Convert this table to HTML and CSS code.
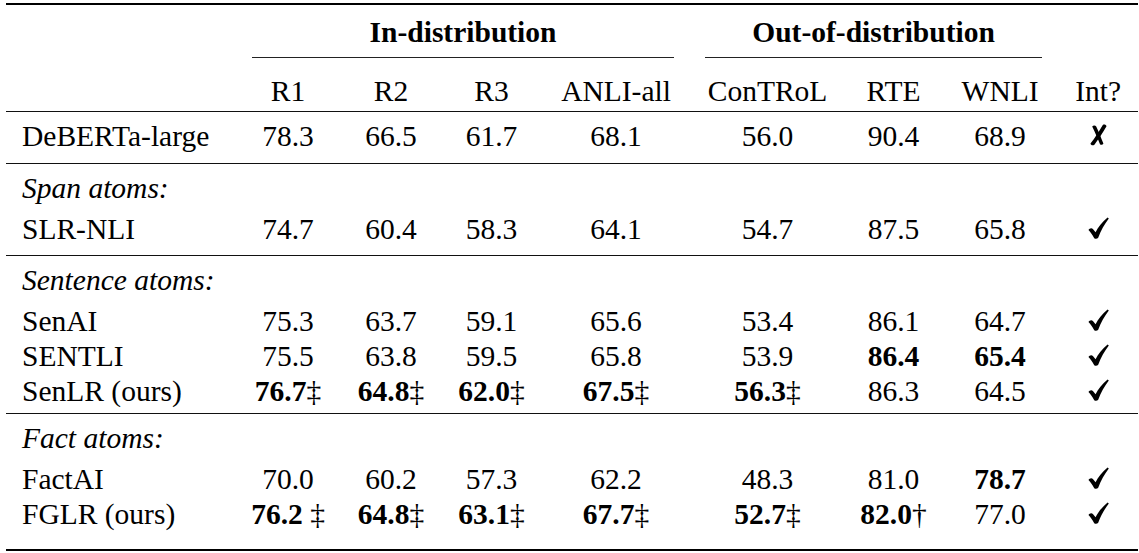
FILE: index.html
```html
<!DOCTYPE html>
<html lang="en">
<head>
<meta charset="utf-8">
<title>Results table</title>
<link rel="stylesheet" href="styles.css">
</head>
<body>
<svg class="defs" width="0" height="0" aria-hidden="true">
  <symbol id="tick" viewBox="0 0 21 22">
    <path d="M0.5 13.1 C1.5 11.1 3.7 10.5 5.1 12.2 L7.6 15.3 C9.9 10.4 14.2 4.8 19.6 0.4 L20.8 1.5 C16.4 7.2 12.9 13.6 10.2 20.8 C9.3 22.1 6.9 22.2 6.1 21.0 C4.5 18.2 2.6 15.4 0.5 13.1 Z"/>
  </symbol>
  <symbol id="cross" viewBox="0 0 20 22">
    <path d="M4.2 2.4 C5.2 1.2 7.4 1.2 8.2 2.4 C10.8 7.4 12.8 13.2 15.4 19.4 C14.8 20.9 12.9 21.3 12.0 20.2 C9.6 14.2 7.2 8.4 4.2 2.4 Z"/>
    <path d="M14.8 0.9 C16.2 0.1 18.2 0.7 18.5 2.2 C14.9 8.6 10.6 14.9 6.4 20.8 C5.0 21.9 2.6 21.3 2.5 19.6 C6.9 13.6 11.1 7.5 14.8 0.9 Z"/>
  </symbol>
</svg>
<table class="results">
  <colgroup>
    <col class="c-lbl"><col class="c-r1"><col class="c-r2"><col class="c-r3"><col class="c-anli">
    <col class="c-ctrl"><col class="c-rte"><col class="c-wnli"><col class="c-int">
  </colgroup>
  <thead>
    <tr class="hrow-1">
      <th class="lbl"></th>
      <th colspan="4" class="grp grp-in"><div class="grp-rule">In-distribution</div></th>
      <th colspan="3" class="grp grp-out"><div class="grp-rule">Out-of-distribution</div></th>
      <th></th>
    </tr>
    <tr class="hrow-2">
      <th class="lbl"></th>
      <th>R1</th><th>R2</th><th>R3</th><th>ANLI-all</th>
      <th>ConTRoL</th><th>RTE</th><th>WNLI</th><th>Int?</th>
    </tr>
  </thead>
  <tbody class="g1">
    <tr class="first last">
      <td class="lbl">DeBERTa-large</td>
      <td>78.3</td><td>66.5</td><td>61.7</td><td>68.1</td>
      <td>56.0</td><td>90.4</td><td>68.9</td>
      <td><svg class="mark" width="20" height="22"><use href="#cross"/></svg></td>
    </tr>
  </tbody>
  <tbody class="g2">
    <tr class="first"><td class="lbl grp-name" colspan="9">Span atoms:</td></tr>
    <tr class="after-head last">
      <td class="lbl">SLR-NLI</td>
      <td>74.7</td><td>60.4</td><td>58.3</td><td>64.1</td>
      <td>54.7</td><td>87.5</td><td>65.8</td>
      <td><svg class="mark" width="21" height="22"><use href="#tick"/></svg></td>
    </tr>
  </tbody>
  <tbody class="g3">
    <tr class="first"><td class="lbl grp-name" colspan="9">Sentence atoms:</td></tr>
    <tr class="after-head">
      <td class="lbl">SenAI</td>
      <td>75.3</td><td>63.7</td><td>59.1</td><td>65.6</td>
      <td>53.4</td><td>86.1</td><td>64.7</td>
      <td><svg class="mark" width="21" height="22"><use href="#tick"/></svg></td>
    </tr>
    <tr class="next">
      <td class="lbl">SENTLI</td>
      <td>75.5</td><td>63.8</td><td>59.5</td><td>65.8</td>
      <td>53.9</td><td><b>86.4</b></td><td><b>65.4</b></td>
      <td><svg class="mark" width="21" height="22"><use href="#tick"/></svg></td>
    </tr>
    <tr class="next last">
      <td class="lbl">SenLR (ours)</td>
      <td><b>76.7</b><span class="sig">‡</span></td><td><b>64.8</b><span class="sig">‡</span></td><td><b>62.0</b><span class="sig">‡</span></td><td><b>67.5</b><span class="sig">‡</span></td>
      <td><b>56.3</b><span class="sig">‡</span></td><td>86.3</td><td>64.5</td>
      <td><svg class="mark" width="21" height="22"><use href="#tick"/></svg></td>
    </tr>
  </tbody>
  <tbody class="g4">
    <tr class="first"><td class="lbl grp-name" colspan="9">Fact atoms:</td></tr>
    <tr class="after-head">
      <td class="lbl">FactAI</td>
      <td>70.0</td><td>60.2</td><td>57.3</td><td>62.2</td>
      <td>48.3</td><td>81.0</td><td><b>78.7</b></td>
      <td><svg class="mark" width="21" height="22"><use href="#tick"/></svg></td>
    </tr>
    <tr class="next last">
      <td class="lbl">FGLR (ours)</td>
      <td><b>76.2</b> <span class="sig">‡</span></td><td><b>64.8</b><span class="sig">‡</span></td><td><b>63.1</b><span class="sig">‡</span></td><td><b>67.7</b><span class="sig">‡</span></td>
      <td><b>52.7</b><span class="sig">‡</span></td><td><b>82.0</b><span class="sig">†</span></td><td>77.0</td>
      <td><svg class="mark" width="21" height="22"><use href="#tick"/></svg></td>
    </tr>
  </tbody>
</table>
</body>
</html>
```

FILE: styles.css
```css
html, body {
  margin: 0;
  padding: 0;
  background: #ffffff;
}

body {
  padding: 3px 0 0 6px;
  font-family: "Liberation Serif", "Times New Roman", serif;
  font-size: 29.5px;
  color: #000;
}

.defs {
  display: block;
  width: 0;
  height: 0;
  overflow: hidden;
}

.results {
  table-layout: fixed;
  width: 1132px;
  border-collapse: separate;
  border-spacing: 0;
}

.c-lbl { width: 229px; }
.c-r1 { width: 106px; }
.c-r2 { width: 100px; }
.c-r3 { width: 101px; }
.c-anli { width: 148px; }
.c-ctrl { width: 155px; }
.c-rte { width: 97px; }
.c-wnli { width: 116px; }
.c-int { width: 80px; }

.results th,
.results td {
  padding: 0;
  line-height: 29px;
  vertical-align: top;
  text-align: center;
  white-space: nowrap;
  font-weight: 400;
}

.results .lbl {
  text-align: left;
  padding-left: 16px;
}

.results b { font-weight: 700; }
.sig { font-weight: 400; }

/* header rows */
.hrow-1 th {
  border-top: 2px solid #000;
  padding-top: 13px;
}
.hrow-1 .grp { font-weight: 700; }
.grp-rule {
  padding-bottom: 10px;
  border-bottom: 1px solid #222;
}
.grp-in .grp-rule { margin: 0 16px 0 17px; }
.grp-out .grp-rule { margin: 0 16px 0 15px; }

.hrow-2 th {
  padding-top: 19px;
  padding-bottom: 5px;
  border-bottom: 1px solid #111;
}

/* body rows */
.grp-name { font-style: italic; }
.first td { padding-top: 10px; }
.after-head td { padding-top: 12px; }
.next td { padding-top: 6px; }

.last td { border-bottom: 1px solid #111; }
.g1 .last td { padding-bottom: 12px; }
.g2 .last td { padding-bottom: 11px; }
.g3 .last td { padding-bottom: 7px; }
.g4 .last td { padding-bottom: 20px; border-bottom: 2px solid #000; }

.mark {
  display: inline-block;
  vertical-align: 0;
  fill: #000;
}
```
